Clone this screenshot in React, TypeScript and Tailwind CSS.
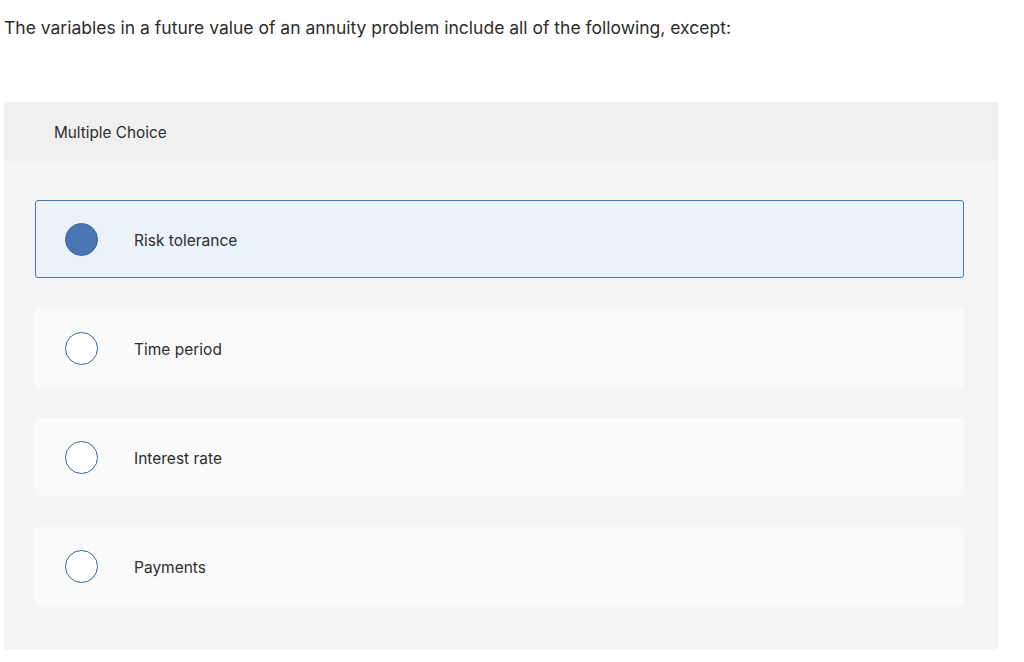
import React from "react";

const options = [
  { label: "Risk tolerance", selected: true },
  { label: "Time period", selected: false },
  { label: "Interest rate", selected: false },
  { label: "Payments", selected: false },
];

const App: React.FC = () => {
  return (
    <div
      className="w-[1024px] h-[662px] bg-white text-[#2d2d2d] overflow-hidden"
      style={{ fontFamily: "Inter, Lato, sans-serif" }}
    >
      <div className="pl-[4px] pt-[17px] h-[102px] text-[17.5px] leading-[22px]">
        The variables in a future value of an annuity problem include all of the following, except:
      </div>

      <div className="ml-[4px] w-[994px] bg-[#f5f5f5]">
        {/* Header */}
        <div className="h-[59px] bg-[#f0f0f0] pl-[50px] pt-[3px] flex items-center text-[15.3px]">
          Multiple Choice
        </div>

        {/* Options */}
        <div className="pt-[39px] pb-[45px] pl-[31px] pr-[34px] flex flex-col gap-[31px]">
          {options.map((opt) => (
            <div
              key={opt.label}
              className={
                opt.selected
                  ? "h-[78px] rounded-[3px] border border-[#4a76b6] bg-[#ebf2fa] flex items-center pl-[29px]"
                  : "h-[78px] rounded-[3px] border border-[#fafafa] bg-[#fafafa] flex items-center pl-[29px]"
              }
            >
              <span
                className={
                  opt.selected
                    ? "w-[33px] h-[33px] rounded-full bg-[#4a75b5] border border-[#3d629c] shrink-0"
                    : "w-[33px] h-[33px] rounded-full bg-white border border-[#3d629c] shrink-0"
                }
              />
              <span className="ml-[36px] pt-[3px] text-[15.5px]">{opt.label}</span>
            </div>
          ))}
        </div>
      </div>
    </div>
  );
};

export default App;
